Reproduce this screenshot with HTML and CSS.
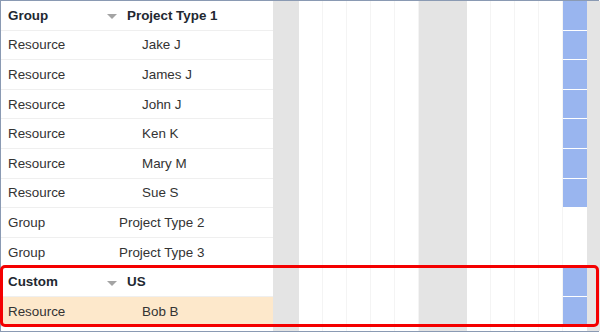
FILE: index.html
```html
<!DOCTYPE html>
<html lang="en">
<head>
    <meta charset="UTF-8">
    <meta name="viewport" content="width=device-width, initial-scale=1.0">
    <title>Resource Schedule</title>
    <link rel="stylesheet" href="styles.css">
</head>
<body>
    <div class="gantt">
        <div class="grid">
            <div class="row group-row">
                <div class="cell type">Group</div>
                <div class="cell name"><span class="caret"></span>Project Type 1</div>
            </div>
            <div class="row"><div class="cell type">Resource</div><div class="cell name child">Jake J</div></div>
            <div class="row"><div class="cell type">Resource</div><div class="cell name child">James J</div></div>
            <div class="row"><div class="cell type">Resource</div><div class="cell name child">John J</div></div>
            <div class="row"><div class="cell type">Resource</div><div class="cell name child">Ken K</div></div>
            <div class="row"><div class="cell type">Resource</div><div class="cell name child">Mary M</div></div>
            <div class="row"><div class="cell type">Resource</div><div class="cell name child">Sue S</div></div>
            <div class="row"><div class="cell type">Group</div><div class="cell name collapsed">Project Type 2</div></div>
            <div class="row"><div class="cell type">Group</div><div class="cell name collapsed">Project Type 3</div></div>
            <div class="row group-row">
                <div class="cell type">Custom</div>
                <div class="cell name"><span class="caret"></span>US</div>
            </div>
            <div class="row selected"><div class="cell type">Resource</div><div class="cell name child">Bob B</div></div>
        </div>

        <div class="timeline">
            <div class="col off first"></div>
            <div class="col"></div>
            <div class="col"></div>
            <div class="col"></div>
            <div class="col"></div>
            <div class="col"></div>
            <div class="col off"></div>
            <div class="col off"></div>
            <div class="col"></div>
            <div class="col"></div>
            <div class="col"></div>
            <div class="col"></div>
            <div class="col today">
                <div class="slot busy"></div>
                <div class="slot busy"></div>
                <div class="slot busy"></div>
                <div class="slot busy"></div>
                <div class="slot busy"></div>
                <div class="slot busy"></div>
                <div class="slot busy"></div>
                <div class="slot"></div>
                <div class="slot"></div>
                <div class="slot busy"></div>
                <div class="slot busy"></div>
            </div>
            <div class="col off last"></div>
        </div>

        <div class="highlight"></div>
    </div>
</body>
</html>
```

FILE: styles.css
```css
* {
    box-sizing: border-box;
    margin: 0;
    padding: 0;
}

body {
    font-family: "Liberation Sans", Arial, sans-serif;
    font-size: 13.4px;
    color: #333;
    background-color: #fff;
}

.gantt {
    position: relative;
    display: flex;
    width: 599px;
    height: 332px;
    border: 1px solid #8a9ab3;
    border-right-width: 2px;
}

/* left grid */
.grid {
    width: 272px;
    flex: none;
}

.row {
    display: flex;
    height: 29.6px;
    border-bottom: 1px solid #efefef;
    align-items: center;
}

.cell {
    white-space: nowrap;
}

.type {
    width: 100px;
    padding-left: 7px;
}

.name {
    display: flex;
    align-items: center;
}

.name.collapsed {
    padding-left: 18px;
}

.name.child {
    padding-left: 41px;
}

.group-row .cell {
    font-weight: bold;
    color: #222831;
}

.caret {
    width: 0;
    height: 0;
    margin: 3px 10px 0 6px;
    border-left: 5px solid transparent;
    border-right: 5px solid transparent;
    border-top: 5px solid #a4a4a4;
}

.selected {
    background-color: #fde8cb;
}

/* timeline */
.timeline {
    display: flex;
    flex: 1;
}

.col {
    width: 24px;
    flex: none;
    border-right: 1px solid #f4f4f4;
}

.col.off {
    background-color: #e4e4e4;
    border-right: none;
}

.col.first {
    width: 26px;
}

.col.last {
    flex: 1;
}

.col.today {
    border-right: none;
}

.slot {
    height: 29.6px;
    border-bottom: 1px solid #fff;
}

.slot.busy {
    background-color: #99b5ef;
}

.highlight {
    position: absolute;
    left: -1px;
    top: 264px;
    width: 599px;
    height: 62px;
    border: 3px solid #f40000;
    border-radius: 5px;
}
```
